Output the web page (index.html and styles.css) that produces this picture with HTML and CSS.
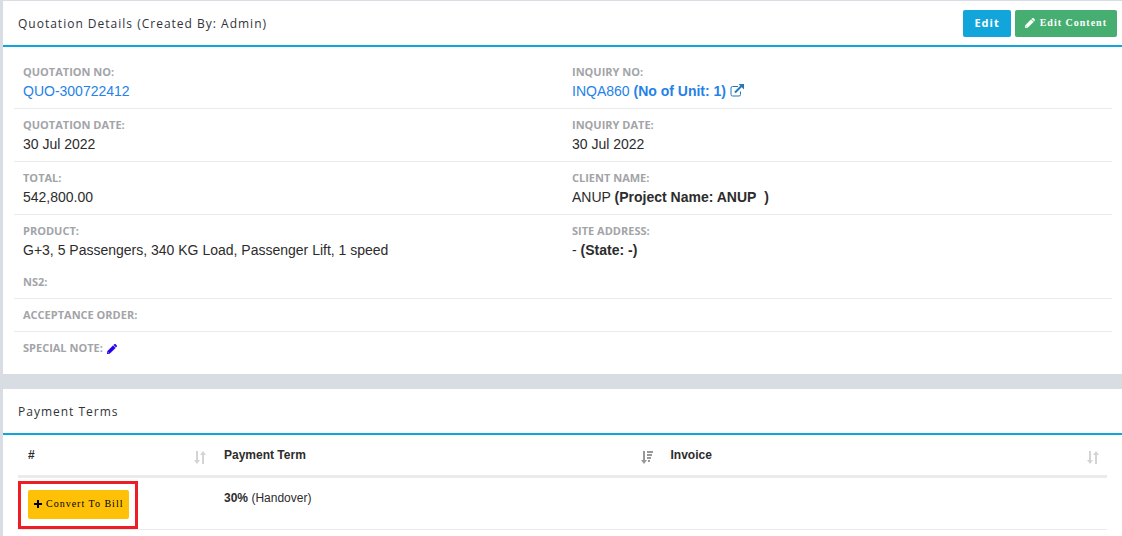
FILE: index.html
```html
<!DOCTYPE html>
<html lang="en">
<head>
<meta charset="utf-8">
<title>Quotation Details</title>
<link rel="stylesheet" href="styles.css">
</head>
<body>
<svg class="defs" width="0" height="0" aria-hidden="true">
  <symbol id="pencil" viewBox="0 0 12 12"><path d="M8 1.200 8.800 .4Q9.600-.2 10.300.4L11.600 1.700Q12.200 2.400 11.600 3.200L10.800 4ZM7.300 1.900 10.100 4.700 3.300 11.500 0 12 .5 8.700ZM1.500 9.400 1.200 10.800 2.600 10.500Z" fill-rule="evenodd" stroke="currentColor" stroke-width=".4"/></symbol>
  <symbol id="sort" viewBox="0 0 12 13"><path d="M2 0h2v9h2l-3 4-3-4h2zM8 13h2V4h2L9 0 6 4h2z"/></symbol>
  <symbol id="sort-desc" viewBox="0 0 12 13"><path d="M2 0h2v9h2l-3 4-3-4h2zM6 0h6v2H6zM6 3h5v2H6zM6 6h4v2H6zM7 9h2v2H7z"/></symbol>
</svg>
<main class="page">
  <section class="panel">
    <header class="panel-head">
      <h2 class="panel-title">Quotation Details (Created By: Admin)</h2>
      <div class="actions">
        <button type="button" class="btn btn-info">Edit</button>
        <button type="button" class="btn btn-success"><svg class="icon-edit"><use href="#pencil"/></svg>Edit Content</button>
      </div>
    </header>
    <div class="details">
      <dl class="row">
        <div class="field"><dt>QUOTATION NO:</dt><dd><a href="#">QUO-300722412</a></dd></div>
        <div class="field"><dt>INQUIRY NO:</dt><dd><a href="#">INQA860 <b>(No of Unit: 1)</b> <svg class="icon-external" viewBox="0 0 14 13"><path d="M8 2.500H2.500Q1 2.500 1 4v6.500Q1 12 2.500 12h6.500Q10.500 12 10.500 10.500V7.500" fill="none" stroke="currentColor"/><path d="M5 8.500 11.500 2" fill="none" stroke="currentColor" stroke-width="2"/><path d="M8.500 0H14v5.500z" fill="currentColor"/></svg></a></dd></div>
      </dl>
      <dl class="row">
        <div class="field"><dt>QUOTATION DATE:</dt><dd>30 Jul 2022</dd></div>
        <div class="field"><dt>INQUIRY DATE:</dt><dd>30 Jul 2022</dd></div>
      </dl>
      <dl class="row">
        <div class="field"><dt>TOTAL:</dt><dd>542,800.00</dd></div>
        <div class="field"><dt>CLIENT NAME:</dt><dd>ANUP <b>(Project Name: ANUP&nbsp; )</b></dd></div>
      </dl>
      <dl class="row row-open">
        <div class="field"><dt>PRODUCT:</dt><dd>G+3, 5 Passengers, 340 KG Load, Passenger Lift, 1 speed</dd></div>
        <div class="field"><dt>SITE ADDRESS:</dt><dd>- <b>(State: -)</b></dd></div>
      </dl>
      <dl class="row"><div class="field"><dt>NS2:</dt></div></dl>
      <dl class="row"><div class="field"><dt>ACCEPTANCE ORDER:</dt></div></dl>
      <dl class="row row-open"><div class="field"><dt>SPECIAL NOTE: <a class="note-edit" href="#" aria-label="Edit special note"><svg class="icon-note"><use href="#pencil"/></svg></a></dt></div></dl>
    </div>
  </section>
  <section class="panel panel-fill">
    <header class="panel-head">
      <h2 class="panel-title">Payment Terms</h2>
    </header>
    <div class="table-wrap">
      <table class="terms">
        <thead>
          <tr>
            <th class="col-action"><div class="th"><span>#</span><svg class="icon-sort"><use href="#sort"/></svg></div></th>
            <th><div class="th"><span>Payment Term</span><svg class="icon-sort active"><use href="#sort-desc"/></svg></div></th>
            <th><div class="th"><span>Invoice</span><svg class="icon-sort"><use href="#sort"/></svg></div></th>
          </tr>
        </thead>
        <tbody>
          <tr>
            <td class="marked"><button type="button" class="btn btn-warning"><svg class="icon-plus" viewBox="0 0 8 8"><path d="M3 0h2v3h3v2H5v3H3V5H0V3h3z"/></svg>Convert To Bill</button><span class="highlight"></span></td>
            <td><b>30%</b> (Handover)</td>
            <td></td>
          </tr>
        </tbody>
      </table>
    </div>
  </section>
</main>
</body>
</html>
```
FILE: styles.css
```css
* { box-sizing: border-box; }
body {
  margin: 0;
  background: #d8dce3;
  color: #2c2c2c;
  font: 14px/20px "Liberation Sans", Arial, sans-serif;
}
.defs { position: absolute; }
svg { fill: currentColor; }
.page {
  display: flex;
  flex-direction: column;
  gap: 15px;
  min-height: 100vh;
  padding: 1px 0 0 3px;
}
.panel { background: #fff; }
.panel-fill { flex: 1; }
.panel-head {
  display: flex;
  align-items: center;
  justify-content: space-between;
  min-height: 46px;
  padding: 0 5px 0 15px;
  border-bottom: 2px solid #12a5dc;
}
.panel-title {
  margin: 0;
  padding-top: 1px;
  color: #303438;
  font: 400 12px/20px "Open Sans", sans-serif;
  letter-spacing: 1px;
}
.actions { display: flex; gap: 4px; }
.btn {
  display: inline-flex;
  align-items: center;
  justify-content: center;
  height: 27px;
  padding: 0 11px;
  border: 0;
  border-radius: 2px;
  font: 10px/16px "Liberation Serif", serif;
  letter-spacing: 1px;
  white-space: nowrap;
}
.btn-info {
  background: #12a5dc;
  color: #fff;
  font: 700 11px/16px "Open Sans", sans-serif;
}
.btn-success {
  padding: 0 10px;
  background: #46ae70;
  color: #fff;
  font-weight: 700;
}
.btn-warning {
  height: 29px;
  padding: 0 6px;
  background: #ffc107;
  color: #000;
}
.icon-edit { width: 10px; height: 10px; margin-right: 5px; }
.icon-plus { width: 8px; height: 8px; margin-right: 4px; }
.icon-external { width: 14px; height: 13px; color: #2878b8; vertical-align: -1px; }
.icon-note { width: 10px; height: 10px; vertical-align: -2px; }
.note-edit { margin-left: 1px; color: #2300e8; }
.details { padding: 9px 10px 9px 11px; }
.row {
  display: grid;
  grid-template-columns: 1fr 1fr;
  min-height: 33px;
  margin: 0;
  padding: 6px 0 7px;
  border-bottom: 1px solid #ebebeb;
}
.row-open { padding-bottom: 6px; border-bottom: 0; }
.field { padding: 0 9px; }
.field dt {
  color: #a2a4a8;
  font: 700 11px/19px "Open Sans", sans-serif;
}
.field dd { margin: 0; }
a { color: #2482e8; text-decoration: none; }
.table-wrap { padding: 0 15px; }
.terms {
  width: 100%;
  border-collapse: collapse;
  table-layout: fixed;
  font-size: 12px;
}
.col-action { width: 18%; }
.terms th {
  height: 41px;
  padding: 0 8px 0 10px;
  border-bottom: 3px solid #ebebeb;
  text-align: left;
}
.th { display: flex; justify-content: space-between; align-items: flex-start; }
.icon-sort { width: 12px; height: 13px; margin-top: 6px; color: #d4d4d4; }
.icon-sort.active { color: #999; }
.terms td {
  height: 53px;
  padding: 10px;
  border-bottom: 1px solid #ebebeb;
  vertical-align: top;
}
.terms .marked { position: relative; padding-top: 12px; }
.highlight {
  position: absolute;
  top: 3px;
  left: 0;
  width: 120px;
  height: 48px;
  border: 3px solid #ee1c25;
  pointer-events: none;
}
```
